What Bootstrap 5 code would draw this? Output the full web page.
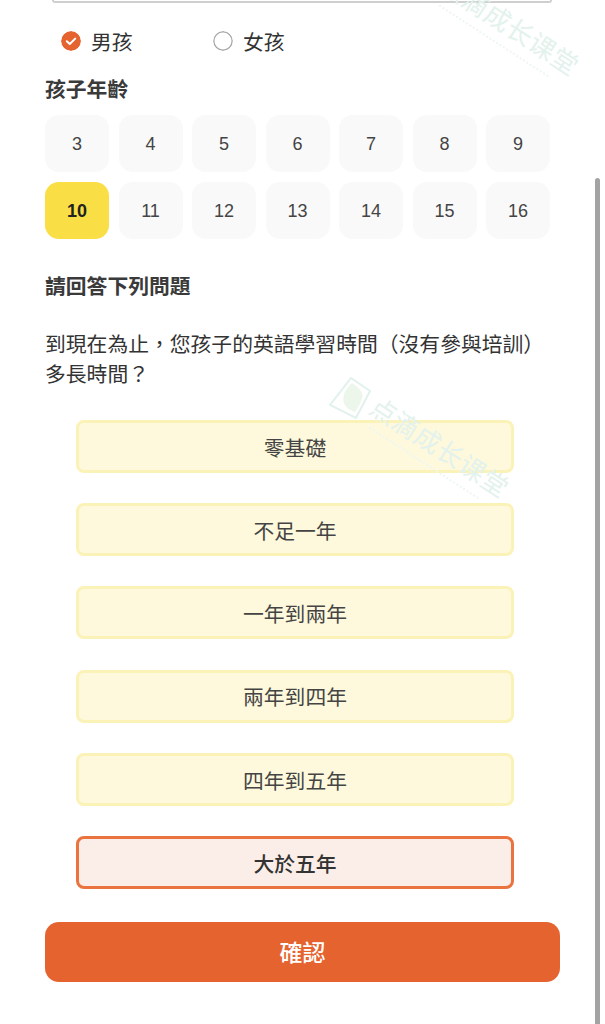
<!DOCTYPE html>
<html lang="zh-Hant">
<head>
<meta charset="utf-8">
<title>孩子資料</title>
<link href="https://cdn.jsdelivr.net/npm/bootstrap@5.3.0/dist/css/bootstrap.min.css" rel="stylesheet">
<style>
html,body{height:1024px;overflow:hidden;background:#fff}
body{position:relative;font-family:"Liberation Sans","Noto Sans CJK TC",sans-serif;color:#333}
.page-wrap{padding:0 45px}
.input-edge{height:3px;margin:0 8px 0 7px;border:2px solid #cfcfcf;border-top:0;border-radius:0 0 8px 8px}
.gender-row{height:24px;margin-top:26px;padding-left:16px;font-size:20.8px;line-height:24px;color:#333}
.gender-item{width:152px;gap:10px}
.gender-item span{padding-top:3px}
.check-dot{width:20px;height:20px;border-radius:50%;flex:none;display:block}
.sec-title{font-size:20.8px;line-height:28px;font-weight:700;color:#3a3a3a}
.age-title{margin-top:23px;margin-bottom:11px}
.age-grid{display:grid;grid-template-columns:repeat(7,64px);column-gap:9.5px;row-gap:10px}
.age-cell{height:57px;padding-top:2px;border-radius:14px;background:#f9f9f9;font-size:18px;color:#444}
.age-on{background:#f9df45;font-weight:700;color:#222}
.q-title{margin-top:34px}
.q-text{margin:29px 0 0;font-size:20.8px;line-height:30px;color:#333}
.opt-list{margin:30px 46px 0 31px;gap:30.2px}
.opt-item{height:53px;padding-top:4px;border:3px solid #fbf2b8;border-radius:8px;background:#fef9dc;font-size:20.8px;color:#444}
.opt-on{border-color:#ea7440;background:#fbeee8;font-weight:500;color:#333}
.go-btn{margin-top:33px;height:60px;width:515px;padding-top:8px;border:0;border-radius:14px;background:#e5632f;color:#fff;font-size:23px;font-weight:500}
.wm{position:absolute;transform-origin:0 0;transform:rotate(33deg);color:#e3f2ed;font-size:26px;line-height:32px;white-space:nowrap;letter-spacing:.5px;font-weight:400}
.wm-one{left:381px;top:391px}
.wm-two{left:451px;top:-31px}
.wm-dots{position:absolute;left:10px;top:36px;width:130px;border-top:2px dotted #eef6f3}
.wm-logo{position:absolute;left:329px;top:377px;width:42px;height:42px}
.scroll-thumb{position:absolute;left:595px;top:178px;width:5px;height:846px;background:#a3a3a3;border-radius:3px 3px 0 0}
</style>
</head>
<body>
<div class="page-wrap">
  <div class="input-edge"></div>
  <div class="gender-row d-flex align-items-center">
    <div class="gender-item d-flex align-items-center">
      <svg class="check-dot" viewBox="0 0 20 20"><circle cx="10" cy="10" r="10" fill="#e5632f"/><path d="M5.8 10.2 8.8 13 14.2 7.6" fill="none" stroke="#fff" stroke-width="2" stroke-linecap="round" stroke-linejoin="round"/></svg>
      <span>男孩</span>
    </div>
    <div class="gender-item d-flex align-items-center">
      <svg class="check-dot" viewBox="0 0 20 20"><circle cx="10" cy="10" r="9.2" fill="#fff" stroke="#a8a8a8" stroke-width="1.4"/></svg>
      <span>女孩</span>
    </div>
  </div>
  <div class="sec-title age-title">孩子年齡</div>
  <div class="age-grid">
    <div class="age-cell d-flex align-items-center justify-content-center">3</div>
    <div class="age-cell d-flex align-items-center justify-content-center">4</div>
    <div class="age-cell d-flex align-items-center justify-content-center">5</div>
    <div class="age-cell d-flex align-items-center justify-content-center">6</div>
    <div class="age-cell d-flex align-items-center justify-content-center">7</div>
    <div class="age-cell d-flex align-items-center justify-content-center">8</div>
    <div class="age-cell d-flex align-items-center justify-content-center">9</div>
    <div class="age-cell age-on d-flex align-items-center justify-content-center">10</div>
    <div class="age-cell d-flex align-items-center justify-content-center">11</div>
    <div class="age-cell d-flex align-items-center justify-content-center">12</div>
    <div class="age-cell d-flex align-items-center justify-content-center">13</div>
    <div class="age-cell d-flex align-items-center justify-content-center">14</div>
    <div class="age-cell d-flex align-items-center justify-content-center">15</div>
    <div class="age-cell d-flex align-items-center justify-content-center">16</div>
  </div>
  <div class="sec-title q-title">請回答下列問題</div>
  <p class="q-text">到現在為止，您孩子的英語學習時間（沒有參與培訓）多長時間？</p>
  <div class="opt-list d-flex flex-column">
    <div class="opt-item d-flex align-items-center justify-content-center">零基礎</div>
    <div class="opt-item d-flex align-items-center justify-content-center">不足一年</div>
    <div class="opt-item d-flex align-items-center justify-content-center">一年到兩年</div>
    <div class="opt-item d-flex align-items-center justify-content-center">兩年到四年</div>
    <div class="opt-item d-flex align-items-center justify-content-center">四年到五年</div>
    <div class="opt-item opt-on d-flex align-items-center justify-content-center">大於五年</div>
  </div>
  <button type="button" class="btn go-btn d-block">確認</button>
</div>
<svg class="wm-logo" viewBox="0 0 42 42" aria-hidden="true"><path d="M22 1 41 14 27 41 1 28Z" fill="none" stroke="#e1f1ec" stroke-width="2"/><path d="M23 6C31 11 35 16 33 22 31 27 28 32 26 35 15 31 13 25 15 17 17 12 20 9 23 6Z" fill="#edf6ea"/></svg>
<div class="wm wm-one">点滴成长课堂<div class="wm-dots"></div></div>
<div class="wm wm-two">点滴成长课堂<div class="wm-dots"></div></div>
<div class="scroll-thumb"></div>
</body>
</html>
